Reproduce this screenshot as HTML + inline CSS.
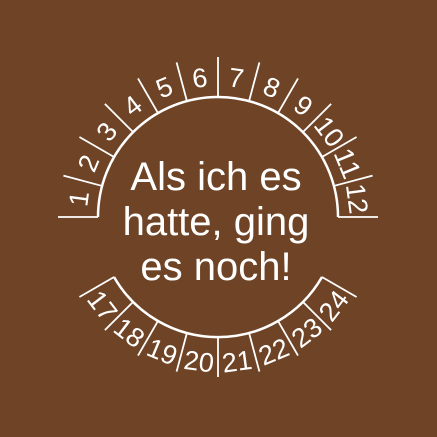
<!DOCTYPE html>
<html><head><style>html,body{margin:0;padding:0;background:#6f4325;}svg{display:block}</style></head>
<body>
<svg width="437" height="437" viewBox="0 0 437 437" xmlns="http://www.w3.org/2000/svg">
<rect width="437" height="437" fill="#6f4325"/>
<g fill="none" stroke="#fff" stroke-width="2.5">
<path d="M98 217 A120 120 0 0 1 338 217"/>
<path d="M114 277 A120 120 0 0 0 322 277"/>
</g>
<g id="t" stroke="#fff" stroke-width="1.8"></g>
<g id="n" fill="#fff" font-family="Liberation Sans, sans-serif" font-size="27" text-anchor="middle"></g>
<g fill="#fff" font-family="Liberation Sans, sans-serif" font-size="40" text-anchor="middle">
<text x="216" y="190">Als ich es</text>
<text x="216" y="235">hatte, ging</text>
<text x="216" y="280">es noch!</text>
</g>
<script>
var cx=218,cy=217,t=document.getElementById('t'),n=document.getElementById('n'),ns='http://www.w3.org/2000/svg';
function tick(a){var r=a*Math.PI/180,l=document.createElementNS(ns,'line');l.setAttribute('x1',cx+120*Math.cos(r));l.setAttribute('y1',cy+120*Math.sin(r));l.setAttribute('x2',cx+160*Math.cos(r));l.setAttribute('y2',cy+160*Math.sin(r));t.appendChild(l);}
function num(a,s,rot,R){var r=a*Math.PI/180,x=cx+R*Math.cos(r),y=cy+R*Math.sin(r),e=document.createElementNS(ns,'text');e.setAttribute('transform','translate('+x+','+y+') rotate('+rot+')');e.setAttribute('y','10');if(String(s).length>1){e.setAttribute('textLength','30');e.setAttribute('lengthAdjust','spacingAndGlyphs');}e.textContent=s;n.appendChild(e);}
for(var i=0;i<=12;i++)tick(-180+15*i);
for(var i=0;i<12;i++){var a=-180+15*i+7.5;num(a,i+1,a+90,141);}
for(var i=0;i<=8;i++)tick(150-15*i);
for(var i=0;i<8;i++){var a=150-15*i-7.5;num(a,17+i,a-90,145);}
</script>
</svg>
</body></html>
